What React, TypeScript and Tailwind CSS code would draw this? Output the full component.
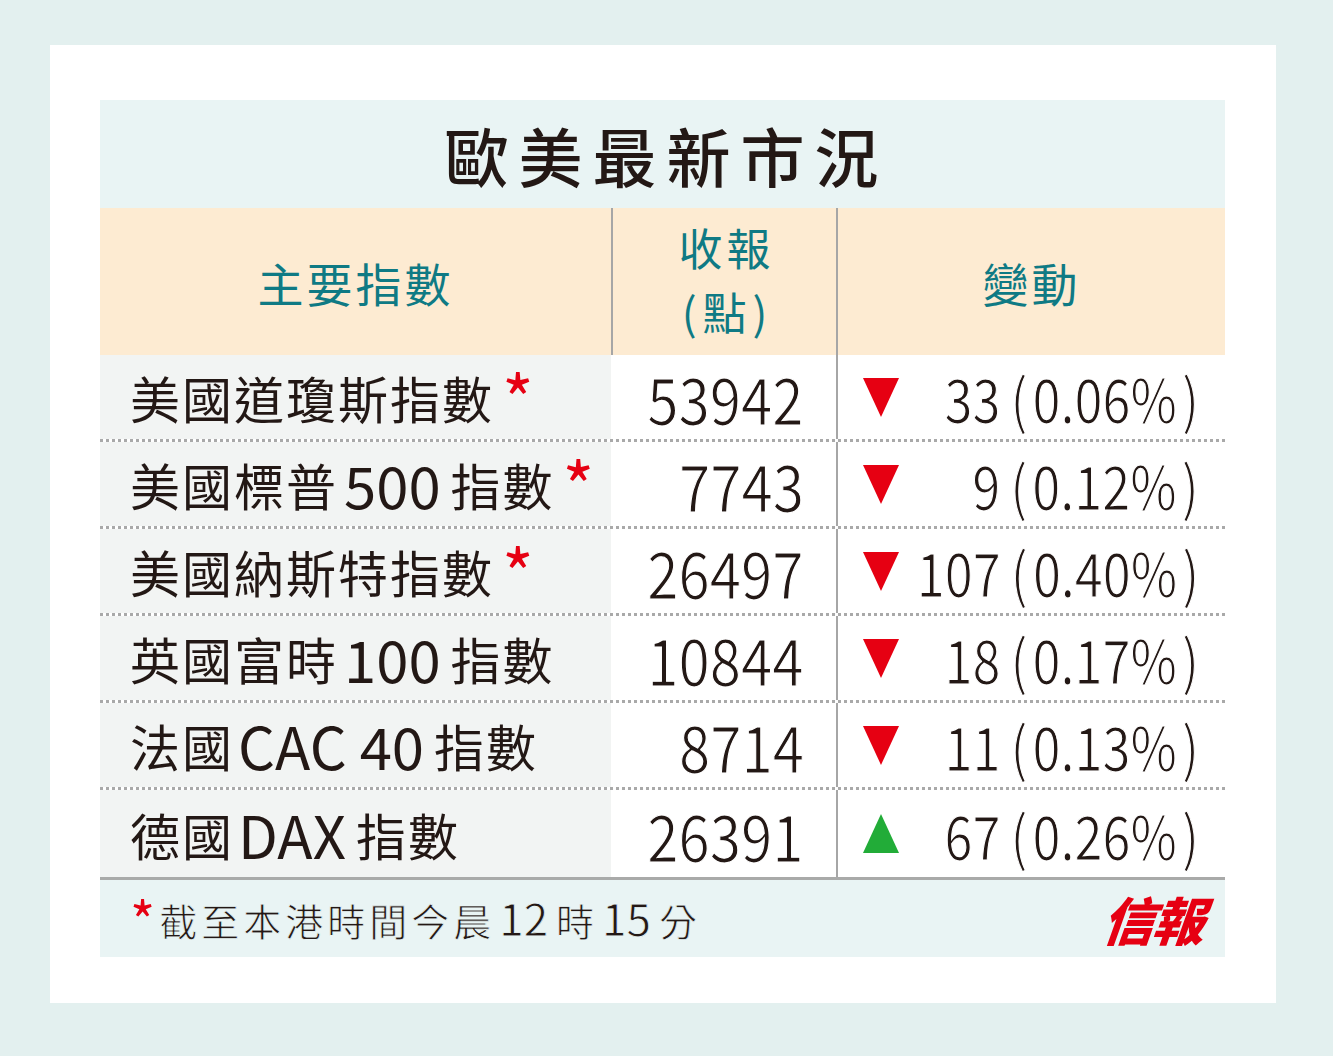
import React from "react";

type Row = {
    name: React.ReactNode
    star?: boolean
    close: string
    up?: boolean
    diff: string
    pct: string
}

const rows: Row[] = [
    { name: <>美國道瓊斯指數</>, star: true, close: "53942", diff: "33", pct: "0.06%" },
    { name: <>美國標普<span className="text-[58px] tracking-[0px] ml-[6px] mr-[10px]">500</span>指數</>, star: true, close: "7743", diff: "9", pct: "0.12%" },
    { name: <>美國納斯特指數</>, star: true, close: "26497", diff: "107", pct: "0.40%" },
    { name: <>英國富時<span className="text-[58px] tracking-[0px] ml-[6px] mr-[10px]">100</span>指數</>, close: "10844", diff: "18", pct: "0.17%" },
    { name: <>法國<span className="text-[58px] tracking-[0px] ml-[4px] mr-[10px]">CAC 40</span>指數</>, close: "8714", diff: "11", pct: "0.13%" },
    { name: <>德國<span className="text-[58px] tracking-[0px] ml-[4px] mr-[10px]">DAX</span>指數</>, close: "26391", up: true, diff: "67", pct: "0.26%" },
]

function Triangle({ up }: { up?: boolean }) {
    return (
        <svg width="36" height="39" viewBox="0 0 36 39" className="shrink-0">
            {up
                ? <polygon points="18,0 36,39 0,39" fill="#22ac38" />
                : <polygon points="0,0 36,0 18,39" fill="#e60012" />}
        </svg>
    )
}

export default function App() {
    return (
        <div className="min-h-[1056px] w-full bg-[#e3f0ef] pl-[50px] pt-[45px] font-['Noto_Sans_CJK_TC','Noto_Sans_CJK_SC',sans-serif] text-[#231815]">
            <div className="w-[1226px] bg-white pl-[50px] pr-[51px] pt-[55px] pb-[46px]">
                {/* title */}
                <div className="h-[108px] bg-[#e9f4f4] flex items-center justify-center">
                    <h1 className="text-[64px] leading-none font-medium tracking-[10px] pl-[8px]">歐美最新市況</h1>
                </div>

                {/* header */}
                <div className="h-[147px] bg-[#fdebd2] grid grid-cols-[511px_227px_387px] text-[#0f7a84] text-[46px]">
                    <div className="flex items-center justify-center tracking-[3px] leading-none">主要指數</div>
                    <div className="border-l-2 border-r-2 border-[#a6a6a6] flex flex-col items-center justify-center pb-[6px] text-[44px]">
                        <span className="tracking-[4px] pl-[4px] leading-[64px]">收報</span>
                        <span className="leading-[64px]">(<span className="mx-[6px]">點</span>)</span>
                    </div>
                    <div className="flex items-center justify-center tracking-[3px] leading-none">變動</div>
                </div>

                {/* rows */}
                <div>
                    {rows.map((r, i) => (
                        <div key={i} className={`grid grid-cols-[511px_227px_387px] h-[87px] ${i < rows.length - 1 ? "border-b-[3px] border-dotted border-[#a9a9a9]" : ""}`}>
                            <div className="bg-[#f2f4f3] flex items-center pl-[30px] text-[50px] leading-none tracking-[2px] whitespace-nowrap">
                                {r.name}
                                {r.star && <span className="text-[#e60012] text-[68px] leading-none ml-[8px] -mt-[4px] self-start pt-[12px]">*</span>}
                            </div>
                            <div className="border-r-2 border-[#a6a6a6] flex items-center justify-end pr-[32px]">
                                <span className="inline-block shrink-0 origin-right scale-x-[0.88] text-[64px] leading-none [-webkit-text-stroke:1.2px_#fff]">{r.close}</span>
                            </div>
                            <div className="flex items-center pl-[25px] pr-[26px]">
                                <Triangle up={r.up} />
                                <div className="flex-1 min-w-0 flex justify-end">
                                    <span className="inline-block shrink-0 origin-right scale-x-[0.84] whitespace-nowrap text-[60px] leading-none [-webkit-text-stroke:1.2px_#fff]">
                                        {r.diff}<span className="ml-[12px] mr-[6px]">(</span>{r.pct}<span className="ml-[6px]">)</span>
                                    </span>
                                </div>
                            </div>
                        </div>
                    ))}
                </div>

                {/* footer */}
                <div className="border-t-[3px] border-[#a9aaa9] h-[80px] bg-[#e9f4f4] flex items-center pl-[30px] pr-[12px]">
                    <span className="text-[#e60012] text-[54px] leading-none self-start pt-[12px] mr-[4px]">*</span>
                    <span className="text-[38px] leading-none tracking-[4px] -mt-[4px] [-webkit-text-stroke:0.8px_#e9f4f4]">截至本港時間今晨<span className="text-[44px] tracking-[0px] ml-[4px] mr-[8px]">12</span>時<span className="text-[44px] tracking-[0px] ml-[4px] mr-[8px]">15</span>分</span>
                    <span className="ml-auto mr-[10px] text-[#e60012] text-[52px] leading-none font-black italic -skew-x-6 tracking-[-2px]">信報</span>
                </div>
            </div>
        </div>
    )
}
